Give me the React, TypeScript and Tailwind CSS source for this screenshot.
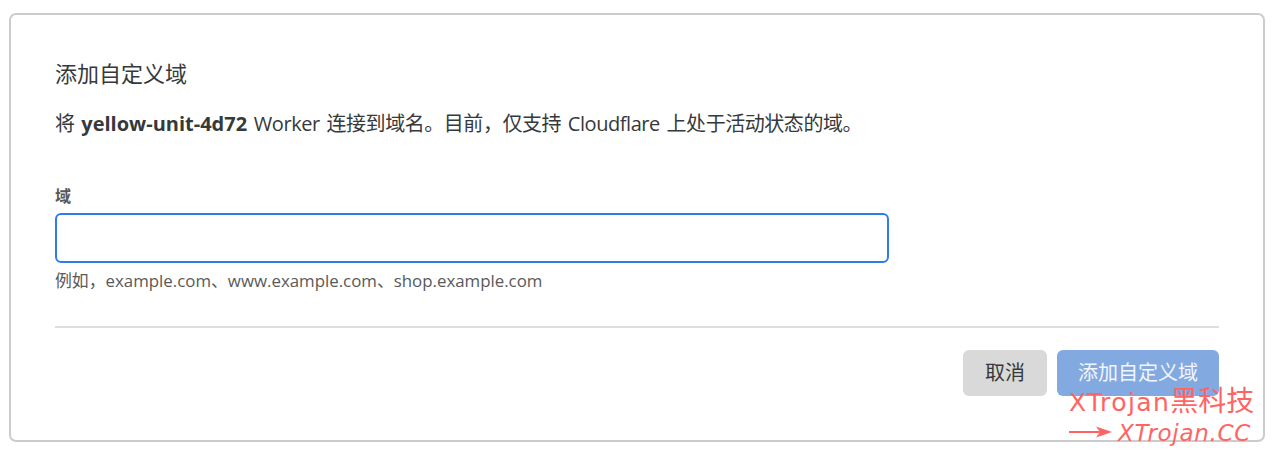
export default function App() {
  return (
    <main className="relative h-[452px] w-[1280px] overflow-hidden bg-white pl-[9px] pr-[15px] pt-[13px] font-['Open_Sans','Noto_Sans_CJK_SC',sans-serif] text-[#36393a]">
      <div className="h-[429px] rounded-[7px] border-2 border-[#cccccc] px-[44px] pt-[42px]">
        <h1 className="text-[22px] leading-[32px]">添加自定义域</h1>
        <p className="mt-[19px] text-[20px] leading-[32px] tracking-[-0.45px] [word-spacing:2px]">
          将 <b className="font-bold tracking-normal">yellow-unit-4d72</b> Worker 连接到域名。目前，仅支持 Cloudflare 上处于活动状态的域。
        </p>
        <label className="mt-[44px] block text-[16px] font-bold leading-[24px] text-[#595959]">域</label>
        <input
          type="text"
          className="mt-[5px] block h-[50px] w-[834px] rounded-[6px] border-2 border-[#2c7cf0] bg-white outline-none"
        />
        <p className="mt-[5px] text-[16.85px] leading-[26px] text-[#595959]">
          例如，example.com、www.example.com、shop.example.com
        </p>
        <div className="mt-[32px] flex justify-end gap-[10px] border-t-2 border-[#dedede] pt-[22px]">
          <button className="h-[46px] w-[84px] rounded-[6px] bg-[#d9d9d9] text-[20px]">取消</button>
          <button className="h-[46px] w-[162px] rounded-[6px] bg-[#82a9e0] text-[20px] text-[#f2f6fc]">添加自定义域</button>
        </div>
      </div>

      <div className="absolute left-[1069px] top-[385px] text-[#ff6464]">
        <div className="whitespace-nowrap font-['DejaVu_Sans','Noto_Sans_CJK_SC',sans-serif] text-[25px] leading-[34px] tracking-[1.4px]">
          XTrojan<span className="text-[28px] tracking-normal">黑科技</span>
        </div>
        <div className="flex items-center gap-[6px]">
          <svg width="43" height="14" viewBox="0 0 43 14" fill="none" className="-mt-[2px]">
            <path d="M0 7H32" stroke="#ff6464" strokeWidth="2" />
            <path d="M27 1.5L43 7L27 12.5L31 7Z" fill="#ff6464" />
          </svg>
          <span className="font-['DejaVu_Sans',sans-serif] text-[23px] italic leading-[26px] tracking-[0.7px]">XTrojan.CC</span>
        </div>
      </div>
    </main>
  )
}
